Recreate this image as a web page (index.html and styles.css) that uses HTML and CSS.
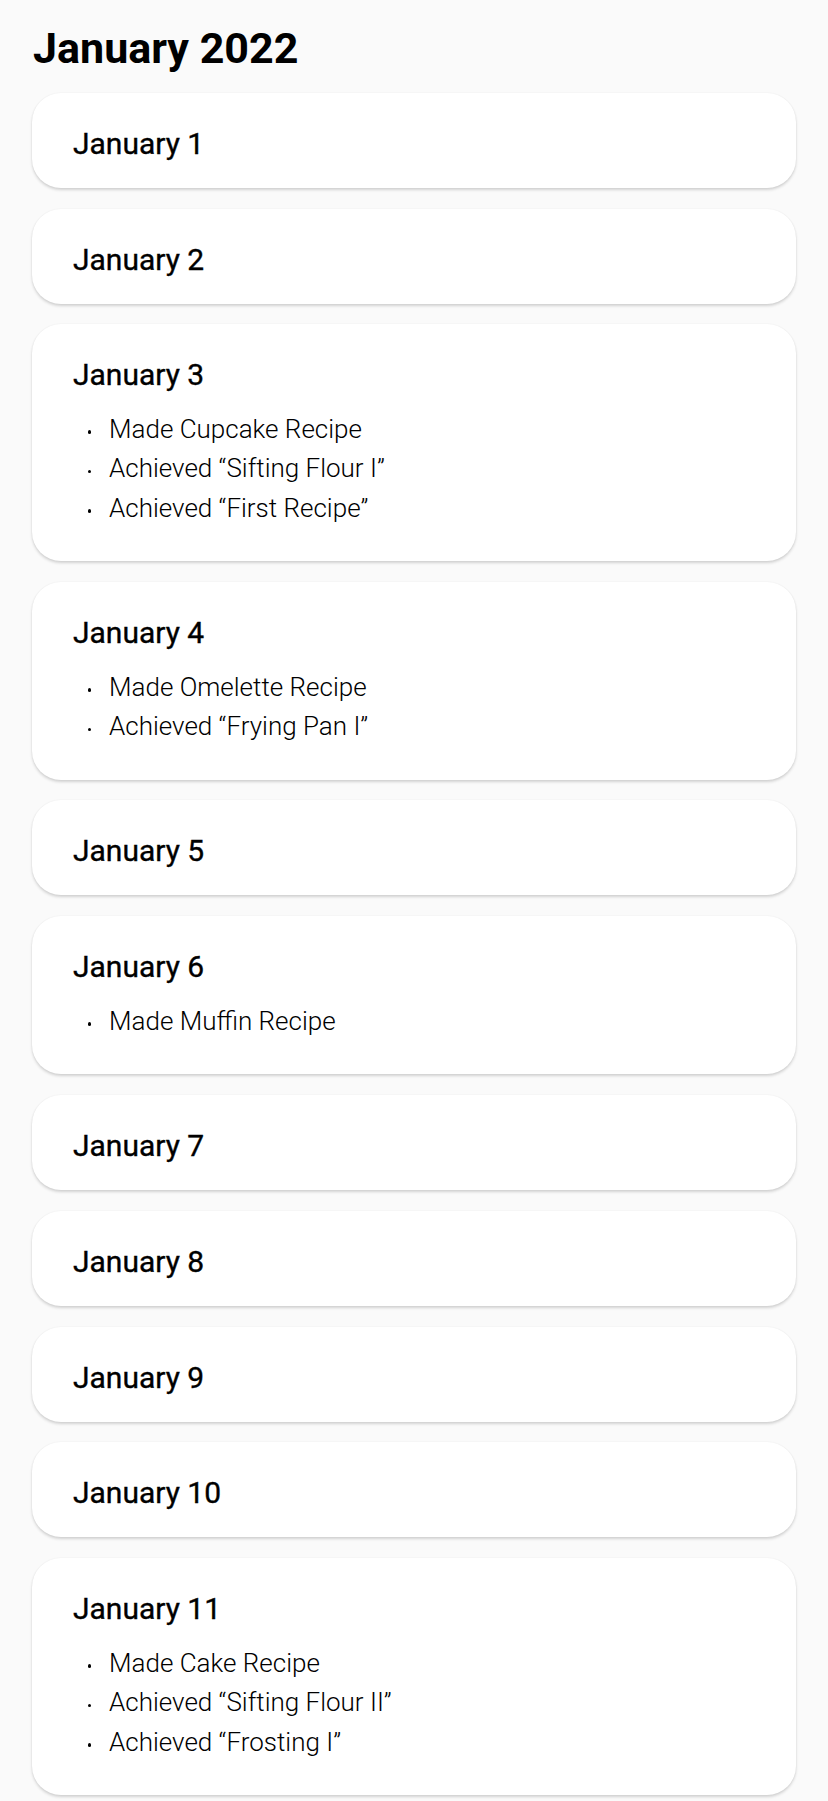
FILE: index.html
```html
<!DOCTYPE html>
<html>
<head>
<meta charset="utf-8">
<link rel="stylesheet" href="styles.css">
</head>
<body>
<main class="page">
  <h1 class="month">January 2022</h1>
  <section class="day"><h2 class="day-title">January 1</h2></section>
  <section class="day"><h2 class="day-title">January 2</h2></section>
  <section class="day">
    <h2 class="day-title">January 3</h2>
    <ul class="events">
      <li>Made Cupcake Recipe</li>
      <li>Achieved “Sifting Flour I”</li>
      <li>Achieved “First Recipe”</li>
    </ul>
  </section>
  <section class="day">
    <h2 class="day-title">January 4</h2>
    <ul class="events">
      <li>Made Omelette Recipe</li>
      <li>Achieved “Frying Pan I”</li>
    </ul>
  </section>
  <section class="day"><h2 class="day-title">January 5</h2></section>
  <section class="day">
    <h2 class="day-title">January 6</h2>
    <ul class="events">
      <li>Made Muffin Recipe</li>
    </ul>
  </section>
  <section class="day"><h2 class="day-title">January 7</h2></section>
  <section class="day"><h2 class="day-title">January 8</h2></section>
  <section class="day"><h2 class="day-title">January 9</h2></section>
  <section class="day"><h2 class="day-title">January 10</h2></section>
  <section class="day">
    <h2 class="day-title">January 11</h2>
    <ul class="events">
      <li>Made Cake Recipe</li>
      <li>Achieved “Sifting Flour II”</li>
      <li>Achieved “Frosting I”</li>
    </ul>
  </section>
</main>
</body>
</html>
```

FILE: styles.css
```css
html, body {
  margin: 0;
  padding: 0;
  background: #fafafa;
}

body {
  font-family: Roboto, "Liberation Sans", sans-serif;
  color: #000;
}

.page {
  display: flex;
  flex-direction: column;
  gap: 20.8px;
  padding: 23px 32px 20px;
}

.month {
  margin: 0 0 -1px 1px;
  font-size: 43px;
  line-height: 50px;
  font-weight: 700;
}

.day {
  background: #fff;
  border-radius: 29px;
  padding: 33px 40px 27px 41px;
  box-shadow: 0 2px 3px rgba(0, 0, 0, 0.16), 0 0 2px rgba(0, 0, 0, 0.05);
}

.day-title {
  margin: 0;
  font-size: 30px;
  line-height: 35px;
  font-weight: 400;
  -webkit-text-stroke: 0.35px #000;
}

.events {
  list-style: none;
  margin: 17.5px 0 6px;
  padding: 0;
}

.events li {
  position: relative;
  padding-left: 36px;
  font-size: 26px;
  line-height: 39.5px;
  font-weight: 300;
}

.events li::before {
  content: "";
  position: absolute;
  left: 14.5px;
  top: 20.5px;
  width: 3.5px;
  height: 3.5px;
  border-radius: 50%;
  background: #000;
}
```
